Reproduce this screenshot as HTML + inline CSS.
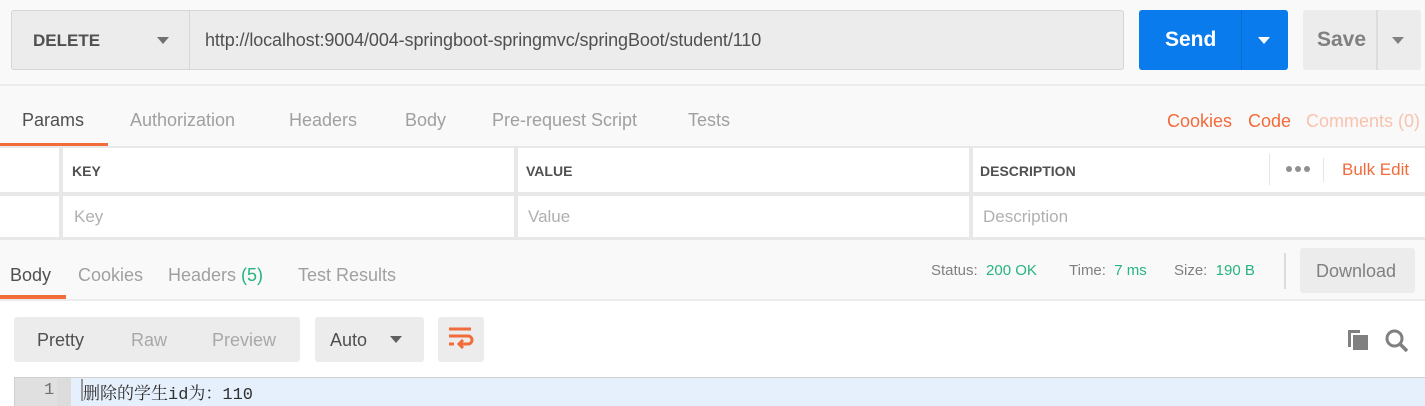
<!DOCTYPE html>
<html><head><meta charset="utf-8"><style>
*{margin:0;padding:0;box-sizing:border-box}
body{width:1425px;height:406px;overflow:hidden;background:#fff;font-family:"Liberation Sans","Noto Sans CJK SC",sans-serif;position:relative;color:#505050}
.a{position:absolute}
.t{font-size:18px;color:#a0a0a0}
</style></head><body>
<div class="a" style="left:0;top:0;width:1425px;height:147px;background:#f9f9f9"></div>
<div class="a" style="left:0;top:84px;width:1425px;height:2px;background:#ececec"></div>
<div class="a" style="left:11px;top:10px;width:1113px;height:60px;background:#ececec;border:1px solid #d6d6d6;border-radius:3px"></div>
<div class="a" style="left:189px;top:11px;width:1px;height:58px;background:#d6d6d6"></div>
<div class="a" style="left:33px;top:31px;font-size:17px;font-weight:bold;color:#505050">DELETE</div>
<div class="a" style="left:157px;top:37px;border-left:6px solid transparent;border-right:6px solid transparent;border-top:7px solid #707070"></div>
<div class="a" style="left:205px;top:30px;font-size:18px;color:#505050;letter-spacing:-0.1px">http://localhost:9004/004-springboot-springmvc/springBoot/student/110</div>
<div class="a" style="left:1139px;top:10px;width:149px;height:60px;background:#097bed;border-radius:3px"></div>
<div class="a" style="left:1241px;top:10px;width:1px;height:60px;background:#0a6cd0"></div>
<div class="a" style="left:1165px;top:28px;font-size:21px;font-weight:bold;color:#fff">Send</div>
<div class="a" style="left:1258px;top:37px;border-left:6px solid transparent;border-right:6px solid transparent;border-top:7px solid #fff"></div>
<div class="a" style="left:1303px;top:10px;width:118px;height:60px;background:#ececec;border-radius:3px"></div>
<div class="a" style="left:1376px;top:10px;width:2px;height:60px;background:#dcdcdc"></div>
<div class="a" style="left:1317px;top:28px;font-size:21px;font-weight:bold;color:#808080">Save</div>
<div class="a" style="left:1392px;top:37px;border-left:6px solid transparent;border-right:6px solid transparent;border-top:7px solid #808080"></div>
<div class="a t" style="left:22px;top:110px;color:#505050">Params</div>
<div class="a t" style="left:130px;top:110px">Authorization</div>
<div class="a t" style="left:289px;top:110px">Headers</div>
<div class="a t" style="left:405px;top:110px">Body</div>
<div class="a t" style="left:492px;top:110px">Pre-request Script</div>
<div class="a t" style="left:688px;top:110px">Tests</div>
<div class="a t" style="left:1167px;top:111px;color:#f26b3a">Cookies</div>
<div class="a t" style="left:1248px;top:111px;color:#f26b3a">Code</div>
<div class="a t" style="left:1306px;top:111px;color:#f8c3ae">Comments (0)</div>
<div class="a" style="left:0;top:143px;width:108px;height:3px;background:#f26b3a"></div>
<div class="a" style="left:0;top:146px;width:1425px;height:94px;background:#e8e8e8"></div>
<div class="a" style="left:0;top:148px;width:59px;height:44px;background:#fff"></div>
<div class="a" style="left:63px;top:148px;width:451px;height:44px;background:#fff"></div>
<div class="a" style="left:518px;top:148px;width:451px;height:44px;background:#fff"></div>
<div class="a" style="left:973px;top:148px;width:452px;height:44px;background:#fff"></div>
<div class="a" style="left:0;top:196px;width:59px;height:41px;background:#fff"></div>
<div class="a" style="left:63px;top:196px;width:451px;height:41px;background:#fff"></div>
<div class="a" style="left:518px;top:196px;width:451px;height:41px;background:#fff"></div>
<div class="a" style="left:973px;top:196px;width:452px;height:41px;background:#fff"></div>
<div class="a" style="left:72px;top:163px;font-size:14px;font-weight:bold;color:#505050">KEY</div>
<div class="a" style="left:526px;top:163px;font-size:14px;font-weight:bold;color:#505050">VALUE</div>
<div class="a" style="left:980px;top:163px;font-size:14px;font-weight:bold;color:#505050">DESCRIPTION</div>
<div class="a" style="left:1269px;top:154px;width:1px;height:31px;background:#e4e4e4"></div>
<svg class="a" style="left:1285px;top:165px" width="26" height="8"><circle cx="4" cy="4" r="3" fill="#909090"/><circle cx="13" cy="4" r="3" fill="#909090"/><circle cx="22" cy="4" r="3" fill="#909090"/></svg>
<div class="a" style="left:1323px;top:158px;width:1px;height:24px;background:#e4e4e4"></div>
<div class="a" style="left:1342px;top:160px;font-size:17px;color:#f26b3a">Bulk Edit</div>
<div class="a" style="left:74px;top:207px;font-size:17px;color:#b0b0b0">Key</div>
<div class="a" style="left:528px;top:207px;font-size:17px;color:#b0b0b0">Value</div>
<div class="a" style="left:983px;top:207px;font-size:17px;color:#b0b0b0">Description</div>
<div class="a" style="left:0;top:240px;width:1425px;height:59px;background:#f9f9f9"></div>
<div class="a" style="left:0;top:299px;width:1425px;height:2px;background:#ececec"></div>
<div class="a t" style="left:10px;top:265px;color:#505050">Body</div>
<div class="a t" style="left:78px;top:265px">Cookies</div>
<div class="a t" style="left:168px;top:265px">Headers <span style="color:#26b47f">(5)</span></div>
<div class="a t" style="left:298px;top:265px">Test Results</div>
<div class="a" style="left:0;top:295px;width:66px;height:4px;background:#f26b3a"></div>
<div class="a" style="left:931px;top:262px;font-size:15px;color:#808080">Status: <span style="color:#26b47f">&nbsp;200 OK</span></div>
<div class="a" style="left:1069px;top:262px;font-size:15px;color:#808080">Time: <span style="color:#26b47f">&nbsp;7 ms</span></div>
<div class="a" style="left:1174px;top:262px;font-size:15px;color:#808080">Size: <span style="color:#26b47f">&nbsp;190 B</span></div>
<div class="a" style="left:1284px;top:253px;width:2px;height:36px;background:#dcdcdc"></div>
<div class="a" style="left:1300px;top:248px;width:115px;height:45px;background:#ececec;border-radius:3px"></div>
<div class="a" style="left:1316px;top:261px;font-size:18px;color:#808080">Download</div>
<div class="a" style="left:14px;top:317px;width:286px;height:45px;background:#ececec;border-radius:3px"></div>
<div class="a" style="left:37px;top:330px;font-size:18px;color:#505050">Pretty</div>
<div class="a" style="left:131px;top:330px;font-size:18px;color:#a8a8a8">Raw</div>
<div class="a" style="left:212px;top:330px;font-size:18px;color:#a8a8a8">Preview</div>
<div class="a" style="left:315px;top:317px;width:109px;height:45px;background:#ececec;border-radius:3px"></div>
<div class="a" style="left:330px;top:330px;font-size:18px;color:#505050">Auto</div>
<div class="a" style="left:390px;top:336px;border-left:6px solid transparent;border-right:6px solid transparent;border-top:7px solid #606060"></div>
<div class="a" style="left:438px;top:317px;width:46px;height:45px;background:#ececec;border-radius:3px"></div>
<svg class="a" style="left:446px;top:326px" width="30" height="28" viewBox="0 0 30 28"><g stroke="#f26b3a" stroke-width="3" fill="none"><path d="M3 3H25"/><path d="M3 10H22a4 4 0 0 1 0 8H14"/><path d="M3 18H8"/><path d="M17 14l-4 4 4 4"/></g></svg>
<svg class="a" style="left:1346px;top:328px" width="24" height="24" viewBox="0 0 24 24"><path d="M2 2h12v3H5v14H2z" fill="#808080"/><rect x="7" y="7" width="15" height="15" fill="#808080"/></svg>
<svg class="a" style="left:1384px;top:328px" width="26" height="26" viewBox="0 0 26 26"><circle cx="10.5" cy="10.5" r="7.5" stroke="#808080" stroke-width="3" fill="none"/><path d="M16 16l7 7" stroke="#808080" stroke-width="3.5"/></svg>
<div class="a" style="left:14px;top:377px;width:1411px;height:29px;background:#e6f0fc;border-top:1px solid #d0d0d0;border-left:1px solid #d0d0d0"></div>
<div class="a" style="left:15px;top:378px;width:42px;height:28px;background:#e0e0e0"></div>
<div class="a" style="left:57px;top:378px;width:14px;height:28px;background:#dcdcdc"></div>
<div class="a" style="left:44px;top:381px;font-family:'Liberation Mono',monospace;font-size:17px;color:#707070">1</div>
<div class="a" style="left:81px;top:379px;width:2px;height:22px;background:#999"></div>
<div class="a" style="left:83px;top:379px;font-family:'Liberation Mono','Noto Serif CJK SC',monospace;font-size:17px;color:#303030">删除的学生id为：110</div>
</body></html>
